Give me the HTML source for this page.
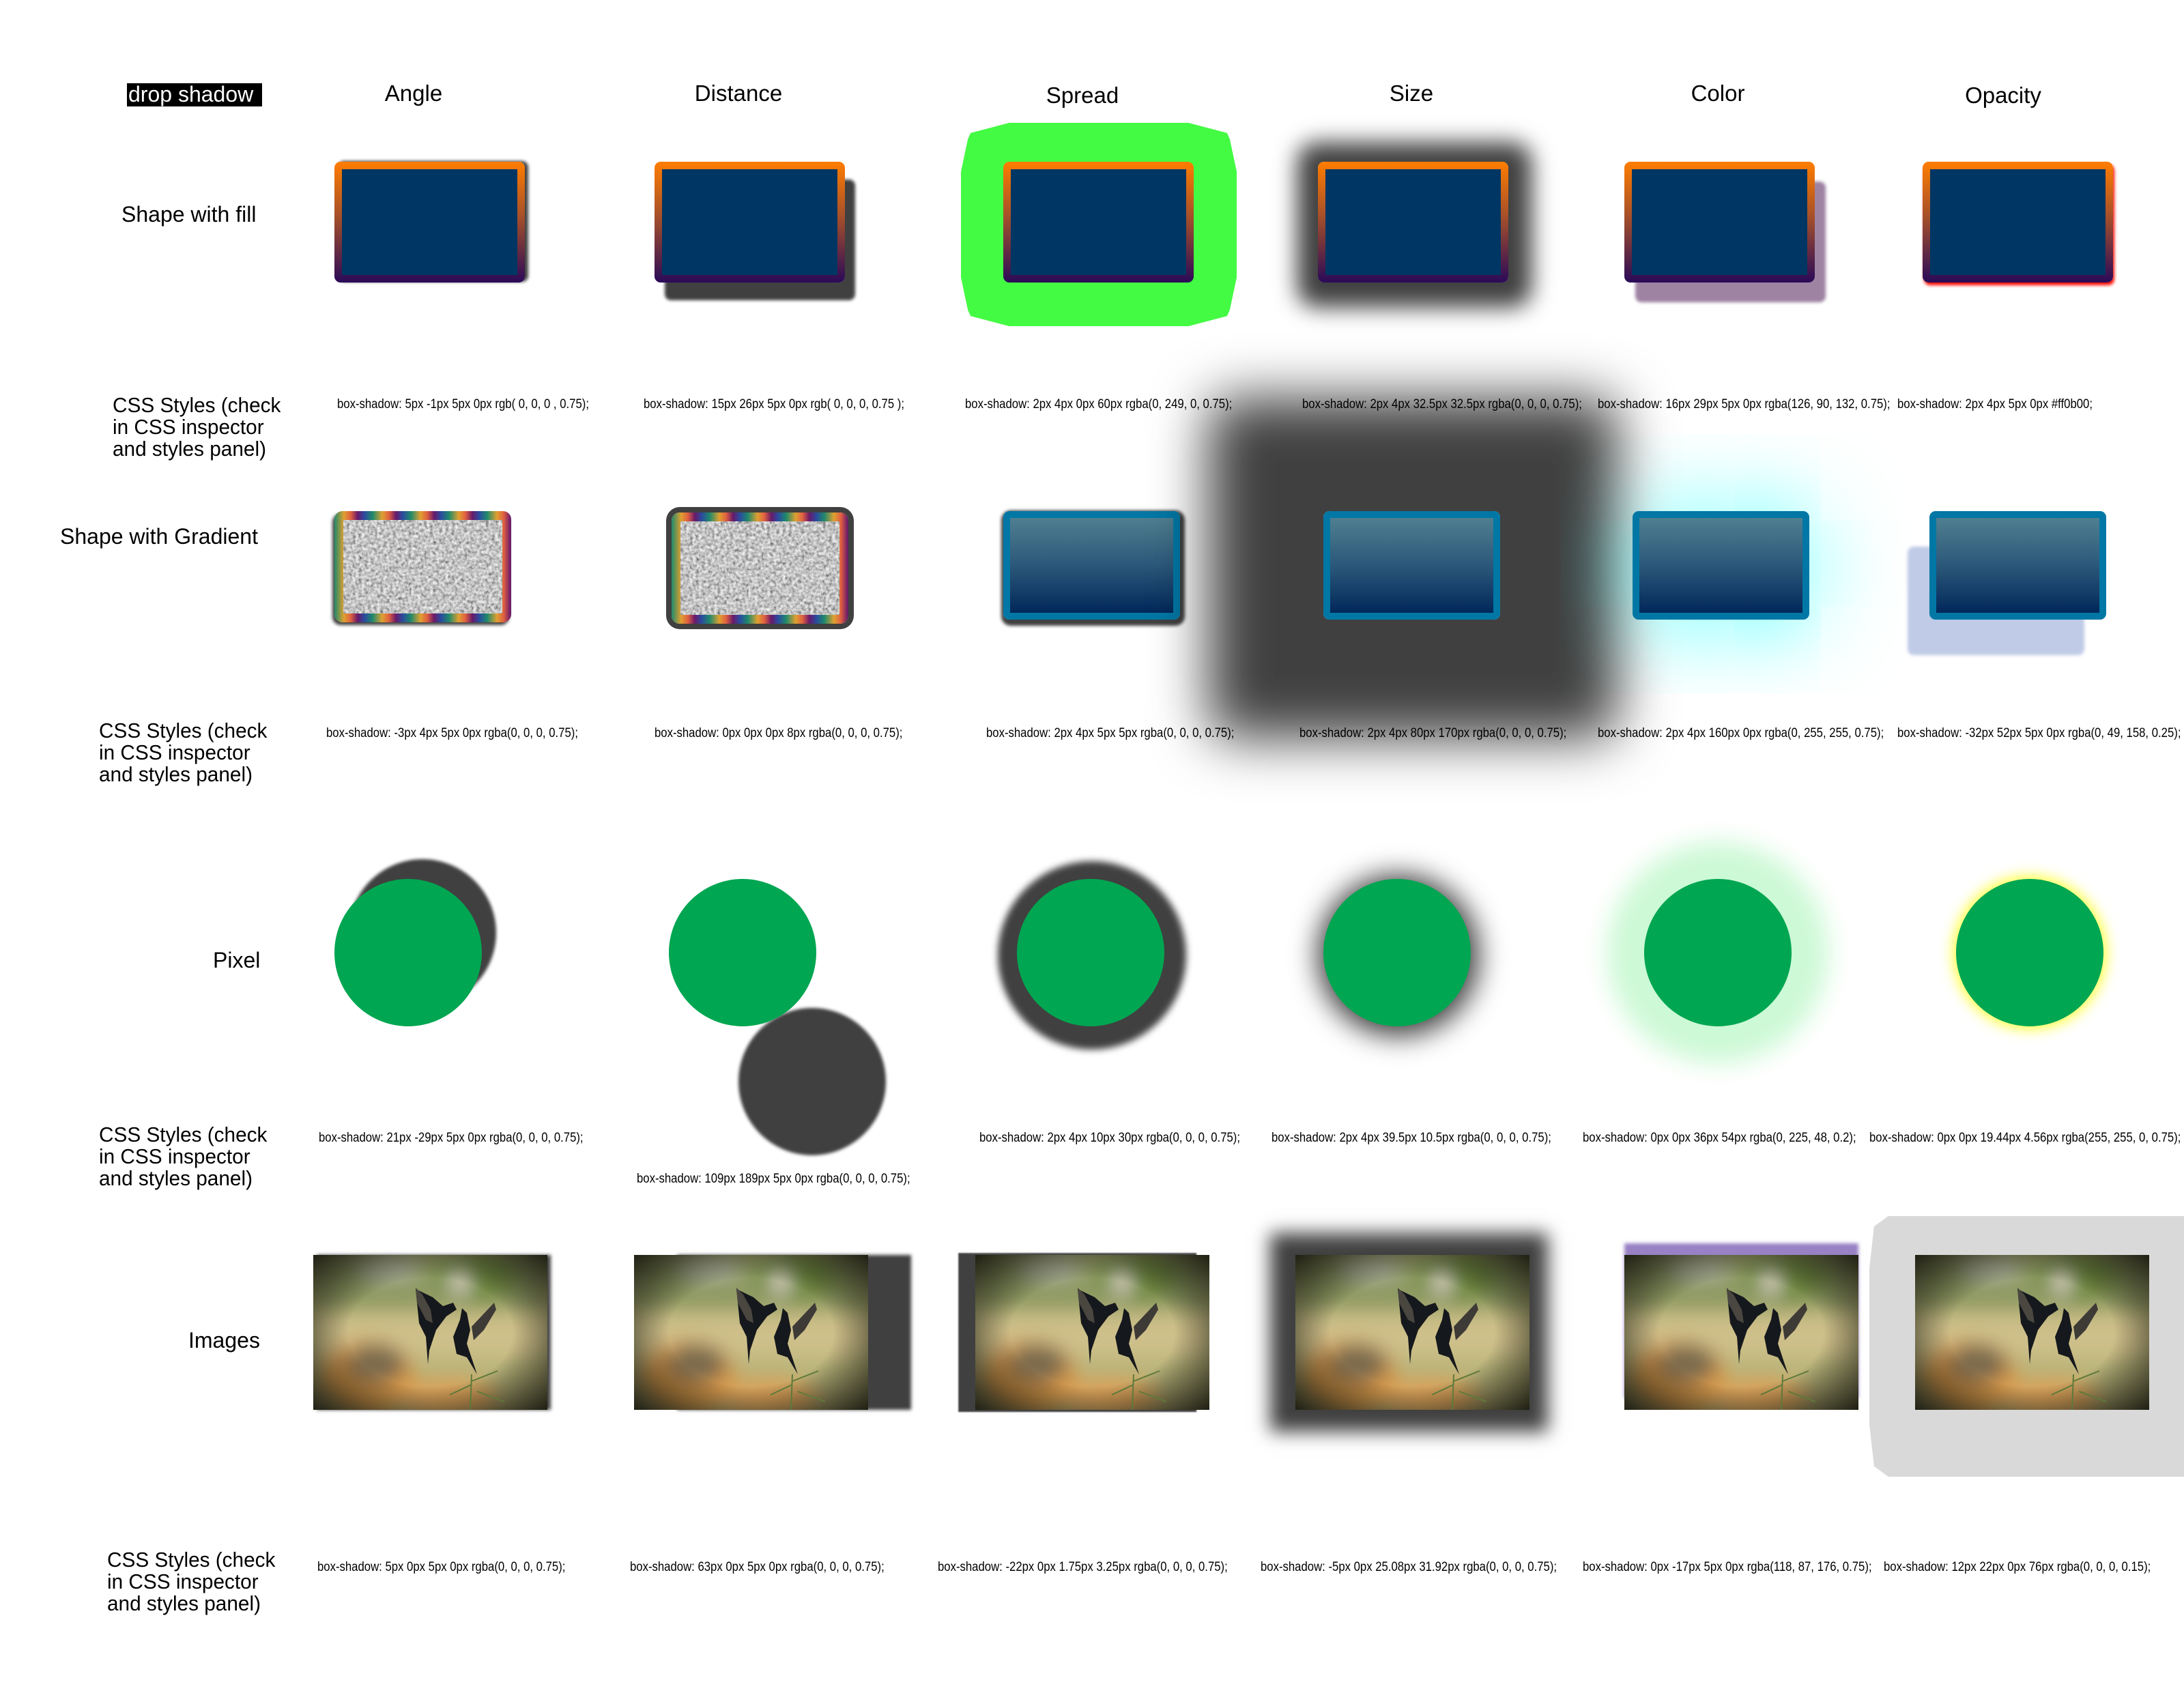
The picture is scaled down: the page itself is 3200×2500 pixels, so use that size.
<!DOCTYPE html>
<html><head><meta charset="utf-8">
<style>
html,body{margin:0;padding:0;background:#fff;}
body{width:3200px;height:2500px;position:relative;overflow:hidden;font-family:"Liberation Sans",sans-serif;color:#000;}
.a{position:absolute;}
.h{position:absolute;font-size:33px;top:118px;transform:translateX(-50%);white-space:nowrap;}
.lab{position:absolute;font-size:31px;line-height:32px;white-space:nowrap;}
.lab2{position:absolute;font-size:31px;line-height:32px;white-space:nowrap;transform:scaleX(.96);transform-origin:0 0;}
.c{position:absolute;font-size:19px;white-space:nowrap;transform:scaleX(.88);transform-origin:0 0;z-index:5;}
.f{position:absolute;width:257px;height:155px;border:11px solid transparent;border-radius:9px;box-sizing:content-box;
 background:linear-gradient(#003663,#003663) padding-box,linear-gradient(#ff7d00,#a6502a 45%,#2a0a58) border-box;}
.g{position:absolute;width:239px;height:139px;border:10px solid transparent;border-radius:9px;
 background:linear-gradient(#4f7f90,#2b587a 50%,#02285a) padding-box,linear-gradient(#0077a5,#0077a5) border-box;}
.n{position:absolute;width:233px;height:137px;border:13px solid transparent;border-radius:12px;overflow:hidden;
 background:repeating-linear-gradient(90deg,#1f8a6a 0,#e0a030 14px,#e06040 24px,#6a1a6a 34px,#2a4aa0 44px,#1f8a6a 56px) border-box;}
.n svg{position:absolute;left:0;top:0;}
.p{position:absolute;width:216px;height:216px;border-radius:50%;background:#00a651;}
.im{position:absolute;width:343px;height:227px;overflow:hidden;}
</style></head><body>
<svg width="0" height="0" style="position:absolute">
<defs>
<filter id="nz2" x="0" y="0" width="100%" height="100%"><feTurbulence type="fractalNoise" baseFrequency="0.22" numOctaves="3" seed="5"/><feColorMatrix type="saturate" values="0"/><feComponentTransfer><feFuncR type="linear" slope="1.5" intercept="-0.2"/><feFuncG type="linear" slope="1.5" intercept="-0.2"/><feFuncB type="linear" slope="1.5" intercept="-0.2"/><feFuncA type="linear" slope="0" intercept="1"/></feComponentTransfer></filter>
<filter id="bl"><feGaussianBlur stdDeviation="14"/></filter>
<radialGradient id="vg" cx="0.5" cy="0.5" r="0.7"><stop offset="0.5" stop-color="#000" stop-opacity="0"/><stop offset="1" stop-color="#1a1a10" stop-opacity="0.95"/></radialGradient>
<g id="bird">
<rect width="343" height="227" fill="#b8b47a"/>
<g filter="url(#bl)">
<rect x="0" y="0" width="343" height="80" fill="#8e9a62"/>
<ellipse cx="240" cy="30" rx="60" ry="35" fill="#6f8a40"/>
<ellipse cx="110" cy="20" rx="45" ry="18" fill="#a9ad98"/>
<ellipse cx="215" cy="40" rx="12" ry="18" fill="#e8dcd0"/>
<rect x="0" y="90" width="343" height="60" fill="#cfc08a"/>
<ellipse cx="80" cy="180" rx="70" ry="55" fill="#d99a48"/>
<ellipse cx="90" cy="160" rx="45" ry="30" fill="#7a6a4e"/>
<ellipse cx="200" cy="210" rx="70" ry="30" fill="#d9a058"/>
</g>
<rect width="343" height="227" fill="url(#vg)"/>
<g fill="#15181c">
<path d="M150 50 L175 62 L190 75 L205 70 L210 80 L195 90 L180 110 L170 140 L168 160 L165 120 L155 100 Z"/>
<path d="M150 48 L160 58 L172 80 L175 100 L165 95 L152 70 Z" fill="#4a4640"/>
<path d="M218 78 L225 85 L230 110 L225 130 L235 160 L240 175 L225 150 L210 145 L205 120 L215 95 Z"/>
<path d="M232 105 L265 70 L268 80 L250 110 L235 125 Z" fill="#3e3a36"/>
</g>
<g stroke="#5d7a3a" stroke-width="2" fill="none"><path d="M230 227 L232 175 M232 190 L200 205 M232 185 L270 170 M240 200 L280 215"/></g>
</g>
</defs></svg>

<!-- headers -->
<div class="a" style="left:186px;top:122px;width:198px;height:34px;background:#000;"></div>
<div class="a" style="left:188px;top:120px;font-size:32px;color:#fff;white-space:nowrap;">drop shadow</div>
<div class="h" style="left:606px;">Angle</div>
<div class="h" style="left:1082px;">Distance</div>
<div class="h" style="left:1586px;top:121px;">Spread</div>
<div class="h" style="left:2068px;">Size</div>
<div class="h" style="left:2517px;">Color</div>
<div class="h" style="left:2935px;top:121px;">Opacity</div>

<!-- row labels -->
<div class="lab" style="left:178px;top:298px;font-size:32px;">Shape with fill</div>
<div class="lab2" style="left:165px;top:578px;">CSS Styles (check<br>in CSS inspector<br>and styles panel)</div>
<div class="lab" style="left:88px;top:770px;font-size:32px;">Shape with Gradient</div>
<div class="lab2" style="left:145px;top:1055px;">CSS Styles (check<br>in CSS inspector<br>and styles panel)</div>
<div class="lab" style="left:312px;top:1391px;font-size:32px;">Pixel</div>
<div class="lab2" style="left:145px;top:1647px;">CSS Styles (check<br>in CSS inspector<br>and styles panel)</div>
<div class="lab" style="left:276px;top:1948px;font-size:32px;">Images</div>
<div class="lab2" style="left:157px;top:2270px;">CSS Styles (check<br>in CSS inspector<br>and styles panel)</div>

<!-- row 1 -->
<div class="f" style="left:490px;top:237px;box-shadow:5px -1px 5px 0px rgba(0,0,0,.75);"></div>
<div class="f" style="left:959px;top:237px;box-shadow:15px 26px 5px 0px rgba(0,0,0,.75);"></div>
<div class="a" style="left:1408px;top:180px;width:404px;height:298px;background:#43fb43;clip-path:polygon(17.5% 0,82.5% 0,96.5% 5%,97.5% 8%,100% 24%,100% 76%,97.5% 92%,96.5% 95%,82.5% 100%,17.5% 100%,3.5% 95%,2.5% 92%,0 76%,0 24%,2.5% 8%,3.5% 5%);"></div>
<div class="f" style="left:1470px;top:237px;"></div>
<div class="f" style="left:1931px;top:237px;box-shadow:2px 4px 32.5px 32.5px rgba(0,0,0,.75);"></div>
<div class="f" style="left:2380px;top:237px;box-shadow:16px 29px 5px 0px rgba(126,90,132,.75);"></div>
<div class="f" style="left:2817px;top:237px;box-shadow:2px 4px 5px 0px #ff0b00;"></div>

<div class="c" style="left:494px;top:582px;">box-shadow: 5px -1px 5px 0px rgb( 0, 0, 0 , 0.75);</div>
<div class="c" style="left:943px;top:582px;">box-shadow: 15px 26px 5px 0px rgb( 0, 0, 0, 0.75 );</div>
<div class="c" style="left:1414px;top:582px;">box-shadow: 2px 4px 0px 60px rgba(0, 249, 0, 0.75);</div>
<div class="c" style="left:1908px;top:582px;">box-shadow: 2px 4px 32.5px 32.5px rgba(0, 0, 0, 0.75);</div>
<div class="c" style="left:2341px;top:582px;">box-shadow: 16px 29px 5px 0px rgba(126, 90, 132, 0.75);</div>
<div class="c" style="left:2780px;top:582px;">box-shadow: 2px 4px 5px 0px #ff0b00;</div>

<!-- row 2 -->
<div class="n" style="left:490px;top:749px;box-shadow:-3px 4px 5px 0px rgba(0,0,0,.75);"><svg width="233" height="137"><rect width="233" height="137" fill="#8c8c8c" filter="url(#nz2)"/></svg></div>
<div class="n" style="left:984px;top:751px;box-shadow:0 0 0 8px rgba(0,0,0,.75);"><svg width="233" height="137"><rect width="233" height="137" fill="#8c8c8c" filter="url(#nz2)"/></svg></div>
<div class="g" style="left:1470px;top:749px;box-shadow:2px 4px 5px 5px rgba(0,0,0,.75);"></div>
<div class="g" style="left:1939px;top:749px;box-shadow:2px 4px 80px 170px rgba(0,0,0,.75);"></div>
<div class="g" style="left:2392px;top:749px;box-shadow:2px 4px 160px 0px rgba(0,255,255,.75);"></div>
<div class="g" style="left:2827px;top:749px;box-shadow:-32px 52px 5px 0px rgba(0,49,158,.25);"></div>

<div class="c" style="left:478px;top:1064px;">box-shadow: -3px 4px 5px 0px rgba(0, 0, 0, 0.75);</div>
<div class="c" style="left:959px;top:1064px;">box-shadow: 0px 0px 0px 8px rgba(0, 0, 0, 0.75);</div>
<div class="c" style="left:1445px;top:1064px;">box-shadow: 2px 4px 5px 5px rgba(0, 0, 0, 0.75);</div>
<div class="c" style="left:1904px;top:1064px;">box-shadow: 2px 4px 80px 170px rgba(0, 0, 0, 0.75);</div>
<div class="c" style="left:2341px;top:1064px;">box-shadow: 2px 4px 160px 0px rgba(0, 255, 255, 0.75);</div>
<div class="c" style="left:2780px;top:1064px;">box-shadow: -32px 52px 5px 0px rgba(0, 49, 158, 0.25);</div>

<!-- row 3 -->
<div class="p" style="left:490px;top:1288px;box-shadow:21px -29px 5px 0px rgba(0,0,0,.75);"></div>
<div class="p" style="left:980px;top:1288px;box-shadow:102px 189px 5px 0px rgba(0,0,0,.75);"></div>
<div class="p" style="left:1490px;top:1288px;box-shadow:2px 4px 10px 30px rgba(0,0,0,.75);"></div>
<div class="p" style="left:1939px;top:1288px;box-shadow:2px 4px 39.5px 10.5px rgba(0,0,0,.75);"></div>
<div class="p" style="left:2409px;top:1288px;box-shadow:0 0 36px 54px rgba(0,225,48,.2);"></div>
<div class="p" style="left:2866px;top:1288px;box-shadow:0 0 19.44px 4.56px rgba(255,255,0,.75);"></div>

<div class="c" style="left:467px;top:1657px;">box-shadow: 21px -29px 5px 0px rgba(0, 0, 0, 0.75);</div>
<div class="c" style="left:933px;top:1717px;">box-shadow: 109px 189px 5px 0px rgba(0, 0, 0, 0.75);</div>
<div class="c" style="left:1435px;top:1657px;">box-shadow: 2px 4px 10px 30px rgba(0, 0, 0, 0.75);</div>
<div class="c" style="left:1863px;top:1657px;">box-shadow: 2px 4px 39.5px 10.5px rgba(0, 0, 0, 0.75);</div>
<div class="c" style="left:2319px;top:1657px;">box-shadow: 0px 0px 36px 54px rgba(0, 225, 48, 0.2);</div>
<div class="c" style="left:2739px;top:1657px;">box-shadow: 0px 0px 19.44px 4.56px rgba(255, 255, 0, 0.75);</div>

<!-- row 4 -->
<div class="a" style="left:2739px;top:1782px;width:461px;height:382px;background:#d9d9d9;clip-path:polygon(6% 0,100% 0,100% 100%,6% 100%,1.5% 96%,0 80%,0 20%,1.5% 4%);"></div>
<div class="im" style="left:459px;top:1839px;box-shadow:5px 0 5px 0 rgba(0,0,0,.75);"><svg width="343" height="227"><use href="#bird"/></svg></div>
<div class="im" style="left:929px;top:1839px;box-shadow:63px 0 5px 0 rgba(0,0,0,.75);overflow:visible;"><svg width="343" height="227"><use href="#bird"/></svg></div>
<div class="im" style="left:1429px;top:1839px;box-shadow:-22px 0 1.75px 3.25px rgba(0,0,0,.75);"><svg width="343" height="227"><use href="#bird"/></svg></div>
<div class="im" style="left:1898px;top:1839px;box-shadow:-5px 0 25.08px 31.92px rgba(0,0,0,.75);"><svg width="343" height="227"><use href="#bird"/></svg></div>
<div class="im" style="left:2380px;top:1839px;box-shadow:0 -17px 5px 0 rgba(118,87,176,.75);"><svg width="343" height="227"><use href="#bird"/></svg></div>
<div class="im" style="left:2806px;top:1839px;"><svg width="343" height="227"><use href="#bird"/></svg></div>

<div class="c" style="left:465px;top:2286px;">box-shadow: 5px 0px 5px 0px rgba(0, 0, 0, 0.75);</div>
<div class="c" style="left:923px;top:2286px;">box-shadow: 63px 0px 5px 0px rgba(0, 0, 0, 0.75);</div>
<div class="c" style="left:1374px;top:2286px;">box-shadow: -22px 0px 1.75px 3.25px rgba(0, 0, 0, 0.75);</div>
<div class="c" style="left:1847px;top:2286px;">box-shadow: -5px 0px 25.08px 31.92px rgba(0, 0, 0, 0.75);</div>
<div class="c" style="left:2319px;top:2286px;">box-shadow: 0px -17px 5px 0px rgba(118, 87, 176, 0.75);</div>
<div class="c" style="left:2760px;top:2286px;">box-shadow: 12px 22px 0px 76px rgba(0, 0, 0, 0.15);</div>
</body></html>
